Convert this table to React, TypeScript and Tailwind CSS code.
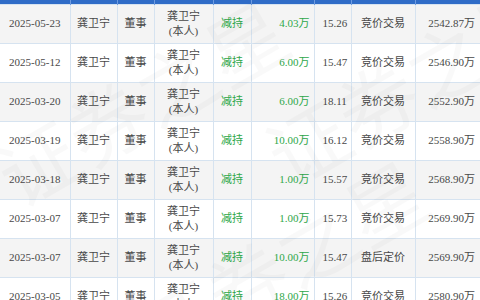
const rows = [
  { date: '2025-05-23', amt: '4.03万', price: '15.26', way: '竞价交易', hold: '2542.87万' },
  { date: '2025-05-12', amt: '6.00万', price: '15.47', way: '竞价交易', hold: '2546.90万' },
  { date: '2025-03-20', amt: '6.00万', price: '18.11', way: '竞价交易', hold: '2552.90万' },
  { date: '2025-03-19', amt: '10.00万', price: '16.12', way: '竞价交易', hold: '2558.90万' },
  { date: '2025-03-18', amt: '1.00万', price: '15.57', way: '竞价交易', hold: '2568.90万' },
  { date: '2025-03-07', amt: '1.00万', price: '15.73', way: '竞价交易', hold: '2569.90万' },
  { date: '2025-03-07', amt: '10.00万', price: '15.47', way: '盘后定价', hold: '2569.90万' },
  { date: '2025-03-05', amt: '18.00万', price: '15.26', way: '竞价交易', hold: '2580.90万' },
]

const widths = [70, 47, 37, 59, 38, 63, 37, 64, 65]

// faint site watermark drawn over the table
const marks = [
  { x: -20, y: 40 },
  { x: 250, y: 20 },
  { x: 120, y: 200 },
]

export default function App() {
  return (
    <div
      className="relative w-[480px] h-[300px] overflow-hidden bg-white text-[11px] text-[#484848]"
      style={{ fontFamily: '"Liberation Serif", "Noto Sans CJK SC", serif' }}
    >
      <table className="w-[480px] table-fixed border-collapse">
        <colgroup>
          {widths.map((w, i) => (
            <col key={i} style={{ width: w }} />
          ))}
        </colgroup>
        <thead>
          <tr className="h-[4px] bg-[#2f6cc7]">
            {widths.map((_, i) => (
              <th key={i} className="p-0 border-x border-[#6e9be0] first:border-l-0" />
            ))}
          </tr>
        </thead>
        <tbody>
          {rows.map((r, i) => (
            <tr key={i} className={`h-[39px] ${i % 2 === 0 ? 'bg-[#f4f4f4]' : 'bg-white'}`}>
              <td className="border border-[#d6e3f0] border-l-0 text-center p-0">{r.date}</td>
              <td className="border border-[#d6e3f0] text-center p-0">龚卫宁</td>
              <td className="border border-[#d6e3f0] text-center p-0">董事</td>
              <td className="border border-[#d6e3f0] text-center p-0 leading-[15px]">
                龚卫宁
                <br />
                (本人)
              </td>
              <td className="border border-[#d6e3f0] text-center p-0 text-[#2ea84a]">减持</td>
              <td className="border border-[#d6e3f0] text-right pr-[4px] text-[#2ea84a]">{r.amt}</td>
              <td className="border border-[#d6e3f0] text-left pl-[8px]">{r.price}</td>
              <td className="border border-[#d6e3f0] text-center p-0">{r.way}</td>
              <td className="border border-[#d6e3f0] border-r-0 text-right pr-[5px]">{r.hold}</td>
            </tr>
          ))}
        </tbody>
      </table>
      {marks.map((m, i) => (
        <div
          key={i}
          className="pointer-events-none absolute text-[80px] text-black/[0.025] whitespace-nowrap -rotate-[30deg]"
          style={{ left: m.x, top: m.y, fontFamily: '"Noto Sans CJK SC", sans-serif' }}
        >
          证券之星
        </div>
      ))}
    </div>
  )
}
